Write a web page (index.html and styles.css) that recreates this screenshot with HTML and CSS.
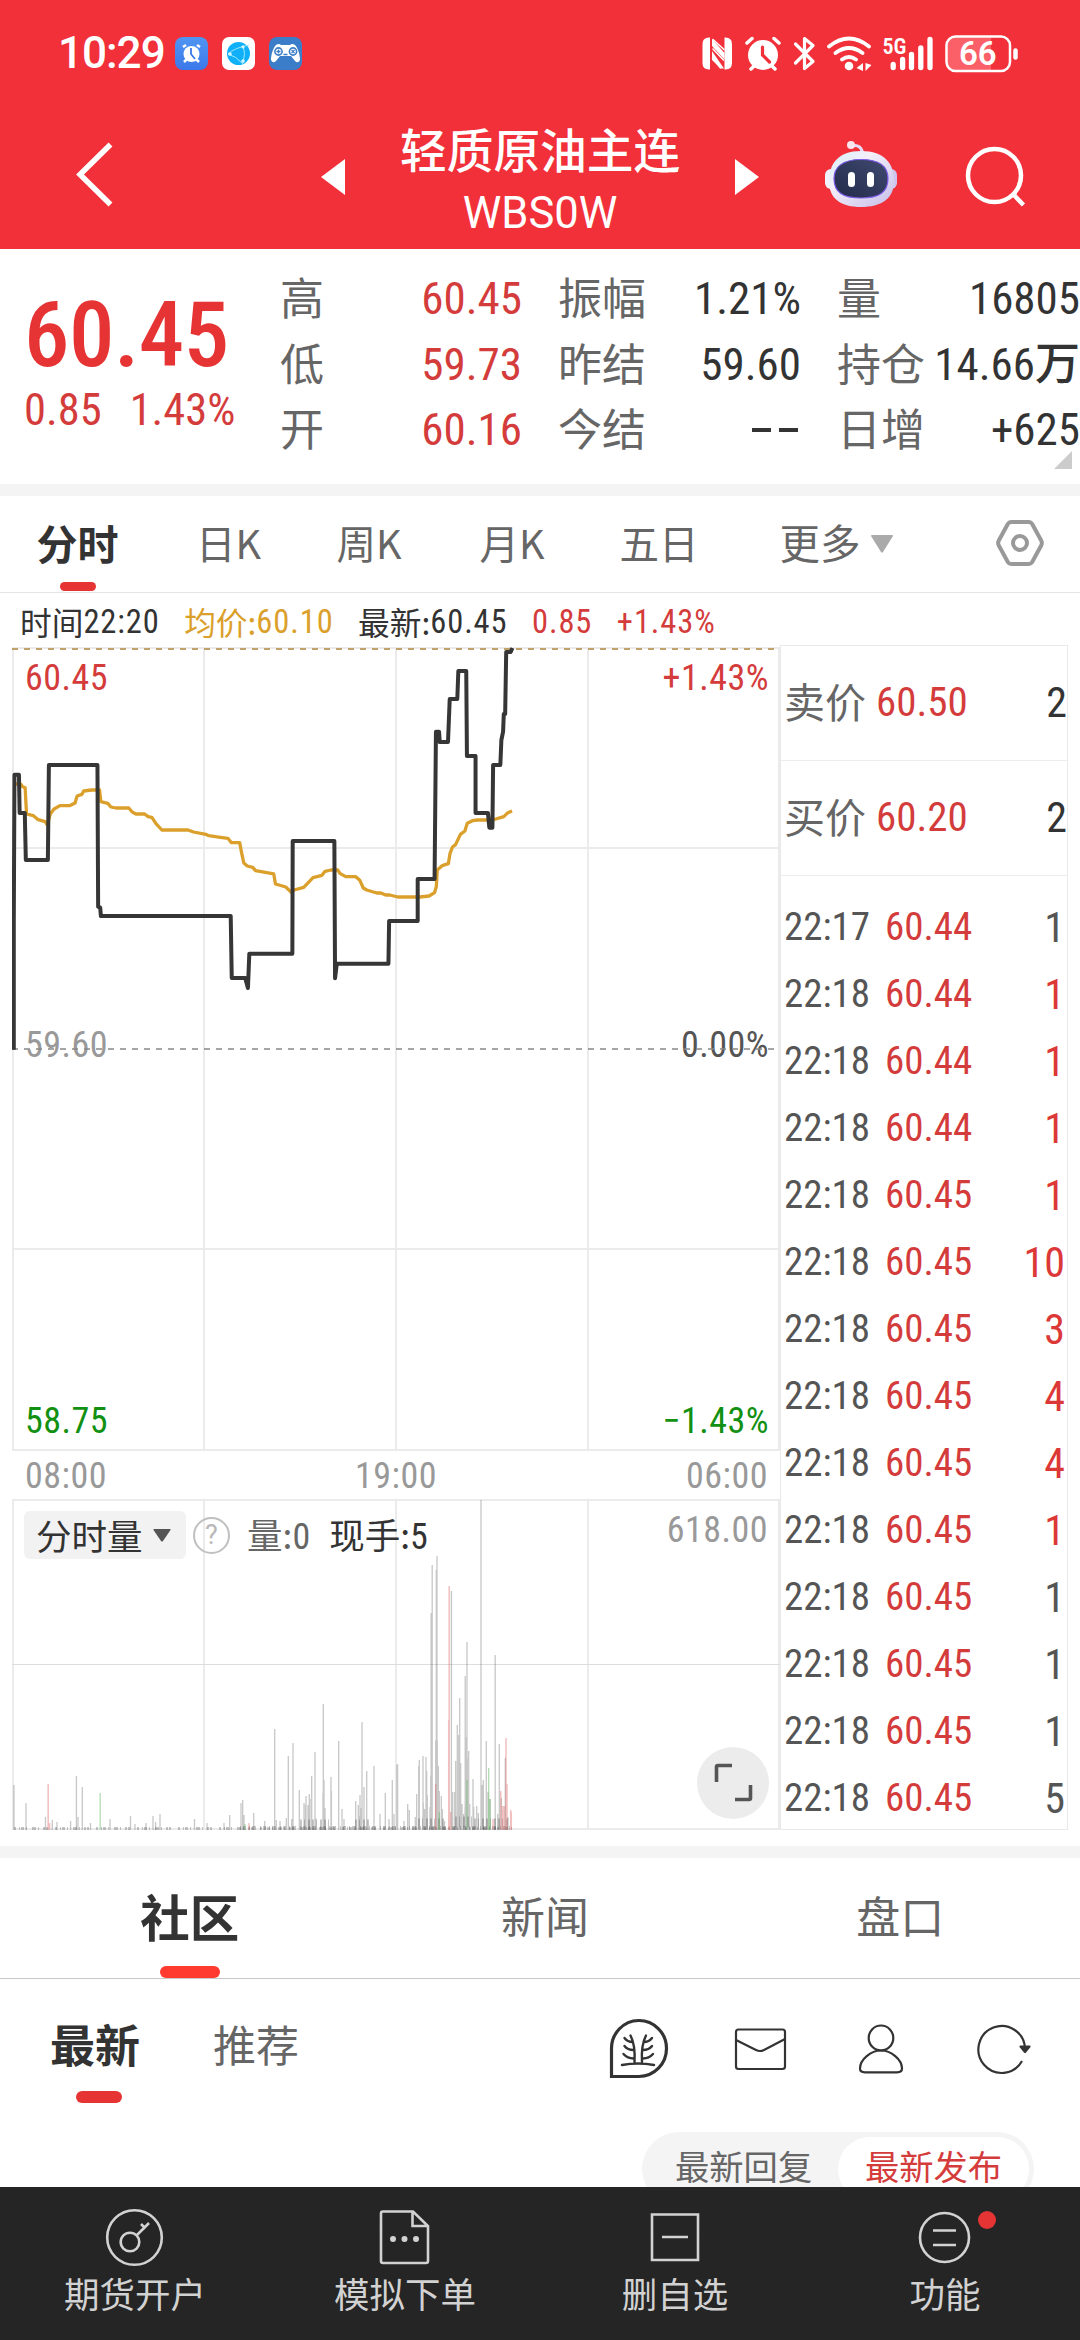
FILE: index.html
```html
<!DOCTYPE html>
<html lang="zh-CN">
<head>
<meta charset="utf-8">
<title>轻质原油主连 WBS0W</title>
<link rel="stylesheet" href="styles.css">
</head>
<body>
<div class="app">
  <header class="header">
    <div class="status">
      <span class="clock">10:29</span>
      <svg class="apps" width="128" height="34" viewBox="175 37 128 34">
        <defs><linearGradient id="ga" x1="0" y1="0" x2="0" y2="1"><stop offset="0" stop-color="#4f95f3"/><stop offset="1" stop-color="#3b78ea"/></linearGradient></defs>
        <rect x="175" y="37" width="33" height="33" rx="8" fill="url(#ga)"/>
        <circle cx="191.500" cy="54" r="8" fill="#fff"/>
        <path d="M183 47l3-2M200 47l-3-2M184 62l3-3M199 62l-3-3" stroke="#fff" stroke-width="2.500"/>
        <path d="M191 48v6l4 5" stroke="#3b78ea" stroke-width="1.800" fill="none"/>
        <rect x="222" y="37" width="33" height="33" rx="7" fill="#fff"/>
        <circle cx="238.500" cy="53.500" r="11.500" fill="#0fb0f8"/>
        <path d="M228 54Q234 48 249 45M228 54q8 2 15 10M243 45q3 8 0 18" stroke="#9be6ff" stroke-width="1" fill="none"/>
        <circle cx="230" cy="54" r="1.800" fill="#d4f6ff"/><circle cx="243" cy="47" r="1.600" fill="#d4f6ff"/><circle cx="243" cy="61" r="1.800" fill="#d4f6ff"/>
        <rect x="269" y="37" width="33" height="33" rx="8" fill="#3b7dc8"/>
        <path d="M276 45q3-2 5 0h9q2-2 5 0c3 3 5 10 5 15q-2 4-5 1l-4-5h-11l-4 5q-3 3-5-1c0-5 2-12 5-15z" fill="#fff"/>
        <circle cx="278.500" cy="51.500" r="3.600" fill="none" stroke="#3b7dc8" stroke-width="1.600"/><circle cx="293" cy="51.500" r="3.600" fill="none" stroke="#3b7dc8" stroke-width="1.600"/>
        <path d="M276.500 51.500h4M278.500 49.500v4M291.500 50l3 3M294.500 50l-3 3M283.500 54.500h4" stroke="#3b7dc8" stroke-width="1.300"/>
      </svg>
      <svg class="sys" width="320" height="40" viewBox="700 34 320 40" fill="none" stroke="#fff" stroke-linecap="round">
        <path d="M710 37.500h-1q-6.500 0-6.500 6.500v19q0 6.500 6.500 6.500h1zM724.500 37.500h1q6.500 0 6.500 6.500v19q0 6.500-6.500 6.500h-1z" fill="#fff" stroke="none"/>
        <path d="M712 39l12.500 14v6.500L712 46zM712 51l12 17.500h-3L712 60z" fill="#fff" stroke="none"/>
        <path d="M713 39.500l11 10M713 49l10.500 11M712.500 58l8 10" stroke-width="1.600"/>
        <circle cx="763" cy="55" r="15" fill="#fff" stroke="none"/>
        <path d="M747 43l5-4.500M779 43l-5-4.500M751 69l4-4M775 69l-4-4" stroke-width="3.500"/>
        <path d="M762.500 47v8l7 7" stroke="#f13039" stroke-width="3.200"/>
        <path d="M795.500 44l17.500 17.500-8.500 7V38.500l8.500 7L795.500 63" stroke-width="3.200" stroke-linejoin="round"/>
        <path d="M829 46.500q20-16 40 0M835.500 53q13.500-10 27 0M842 59.500q7-5 14 0" stroke-width="3.800"/>
        <circle cx="849" cy="66" r="4.300" fill="#fff" stroke="none"/>
        <path d="M863 63v8l-6.500-3zM865.500 63v8l6-6z" fill="#fff" stroke="none"/>
        <path d="M893.200 64.500v3M902.600 59.500v8M911.500 54.500v13M920.800 48v19.500M930 39.500v28" stroke-width="5.300"/>
        <text x="882.500" y="53.500" class="net">5G</text>
        <path d="M955 37h36v34h-36q-9 0-9-9V46q0-9 9-9z" fill="#ff747a" fill-opacity=".7" stroke="none"/>
        <rect x="946.500" y="36.500" width="63.500" height="34.500" rx="9" stroke-width="2.500"/>
        <path d="M1015.500 50.500v7" stroke-width="4.500"/>
        <text x="977.800" y="65" text-anchor="middle" class="batt">66</text>
      </svg>
    </div>
    <div class="titlebar">
      <svg width="400" height="142" viewBox="0 107 400 142">
        <path d="M110.500 144.500L80 174.500l30.500 30" fill="none" stroke="#fff" stroke-width="5.500"/>
        <path d="M345 159v36l-24-18z" fill="#fff"/>
      </svg>
      <div class="titles"><div class="name">轻质原油主连</div><div class="code">WBS0W</div></div>
      <svg width="400" height="142" viewBox="680 107 400 142">
        <defs>
          <linearGradient id="rb" x1="0" y1="0" x2="1" y2="1"><stop offset="0" stop-color="#d5f1fa"/><stop offset=".35" stop-color="#f4effa"/><stop offset="1" stop-color="#c5bde9"/></linearGradient>
          <linearGradient id="rf" x1="0" y1="1" x2="1" y2="0"><stop offset="0" stop-color="#222b4a"/><stop offset="1" stop-color="#404a70"/></linearGradient>
        </defs>
        <path d="M735 159v36l24-18z" fill="#fff"/>
        <path d="M851 146q11-3 12 10" fill="none" stroke="#e7dcf5" stroke-width="3"/>
        <circle cx="851" cy="145" r="4" fill="#fbe5ee"/>
        <rect x="825" y="169" width="14" height="20" rx="6" fill="#f0f3fb"/><rect x="883" y="169" width="14" height="20" rx="6" fill="#cfc5ee"/>
        <path d="M861 151c24 0 33 13 33 30 0 18-13 26-33 26s-32-8-32-26c0-17 9-30 32-30z" fill="url(#rb)"/>
        <path d="M861 159.500c20 0 27 8 27 19 0 14-9 19.500-27 19.500s-27-5.500-27-19.500c0-11 8-19 27-19z" fill="url(#rf)" stroke="#7d5be8" stroke-width="1.200"/>
        <path d="M851.500 175.500v8M870.500 175.500v8" stroke="#fff" stroke-width="7" stroke-linecap="round"/>
        <circle cx="994.500" cy="175.500" r="26.500" fill="none" stroke="#fff" stroke-width="4.500"/>
        <path d="M1013 194l10.500 11" stroke="#fff" stroke-width="4.500"/>
      </svg>
    </div>
  </header>

  <section class="quote">
    <div class="price"><div class="last">60.45</div><div class="chg"><span>0.85</span><span>1.43%</span></div></div>
    <dl class="stats s1"><dt>高</dt><dd>60.45</dd><dt>低</dt><dd>59.73</dd><dt>开</dt><dd>60.16</dd></dl>
    <dl class="stats s2"><dt>振幅</dt><dd>1.21%</dd><dt>昨结</dt><dd>59.60</dd><dt>今结</dt><dd class="dash"><i></i><i></i></dd></dl>
    <dl class="stats s3"><dt>量</dt><dd>16805</dd><dt>持仓</dt><dd>14.66万</dd><dt>日增</dt><dd>+625</dd></dl>
    <svg class="corner" width="18" height="18" viewBox="0 0 18 18"><path d="M18 0v18H0z" fill="#ccc"/></svg>
  </section>

  <nav class="periods">
    <span class="on">分时</span><span>日K</span><span>周K</span><span>月K</span><span>五日</span>
    <span>更多<svg width="22" height="18" viewBox="0 0 22 18"><path d="M1 0h20q1.500 0 .7 1.500L12 17q-1 1.400-2 0L.3 1.500Q-.5 0 1 0z" fill="#aaa"/></svg></span>
    <svg class="gear" width="48" height="46" viewBox="0 0 48 46" fill="none" stroke="#999" stroke-width="4"><path d="M15 2h18q2 0 3.200 2l9 16.500q1.300 2.500 0 5L36.200 42q-1.200 2-3.200 2H15q-2 0-3.200-2l-9-16.500q-1.300-2.500 0-5L11.800 4Q13 2 15 2z"/><circle cx="24" cy="23" r="7"/></svg>
  </nav>

  <div class="market">
    <div class="left">
      <div class="info"><span><b>时间</b>22:20</span><span class="avg"><b>均价:</b>60.10</span><span><b>最新:</b>60.45</span><span class="up">0.85</span><span class="up">+1.43%</span></div>
      <svg class="chart" width="768" height="853" viewBox="12 647 768 853">
        <g fill="none" stroke="#ebebeb" stroke-width="2">
          <path d="M12 648H780M12 848H780M12 1249H780M12 1450H780M13 647V1451M204 647V1451M396 647V1451M588 647V1451M779 647V1451"/>
        </g>
        <path d="M12 649H780" stroke="#c2a06c" stroke-width="2" stroke-dasharray="6 6"/>
        <g class="lbl"><text x="25" y="1057" fill="#999">59.60</text><text x="769" y="1057" text-anchor="end" fill="#555">0.00%</text></g>
        <path d="M12 1049H780" stroke="#888" stroke-width="1.500" stroke-dasharray="6 6"/>
        <g transform="translate(0 640) scale(.34435 .33333)" fill="none" stroke-linejoin="round">
          <path vector-effect="non-scaling-stroke" stroke="#dba02c" stroke-width="3.300" d="M43 432H60L66 440L73 443L77 522L97 527L111 539L131 545L137 555L146 522L157 507L174 497H202L218 489L224 468L238 463L243 453L266 450H289L293 485L313 490L322 501L337 504H374L384 516L395 522H420L430 530L441 532L453 551L470 570H546L562 576L598 583L606 587L640 592L662 595L672 608H696L702 640L708 669L718 678L734 682L742 692L795 702L800 732L830 741L846 757L854 750L882 742L909 713L935 706L944 694L961 690H981L987 700L1004 710H1033L1045 721L1055 744L1065 750L1094 759H1106L1120 765H1132L1155 771H1219L1246 768L1262 758L1267 740L1270 690L1284 677L1302 671L1307 640L1314 621L1323 614L1337 583L1350 573L1357 550L1372 542L1387 540H1430L1463 530L1475 518L1487 513"/>
          <path vector-effect="non-scaling-stroke" stroke="#363636" stroke-width="4" d="M40 1229V850L42 404H55L57 519H72L75 660H139L142 375H283L285 800L291 803L293 828H670L673 1014H712L720 1044L724 941H849L850 603H971L973 1015L978 971H1128L1130 843H1213V717H1262L1266 275H1275L1277 306H1301L1306 177H1328L1331 93H1354L1356 348H1381V519H1417L1421 563H1430L1432 375H1453L1456 300L1461 275L1463 222H1467L1470 36H1483L1488 24"/>
        </g>
        <g class="lbl">
          <text x="25" y="690" fill="#d43c3c">60.45</text><text x="769" y="690" text-anchor="end" fill="#d43c3c">+1.43%</text>
          <text x="25" y="1433" fill="#129012">58.75</text><text x="769" y="1433" text-anchor="end" fill="#129012">−1.43%</text>
          <g fill="#999"><text x="25" y="1488">08:00</text><text x="396" y="1488" text-anchor="middle">19:00</text><text x="768" y="1488" text-anchor="end">06:00</text></g>
        </g>
      </svg>
      <div class="volume">
        <svg width="768" height="331" viewBox="12 1499 768 331">
          <path d="M12 1500H780M12 1829H780M13 1499V1830M204 1499V1830M396 1499V1830M588 1499V1830M779 1499V1830" stroke="#ebebeb" stroke-width="2"/>
          <path d="M12 1664.500H780" stroke="#ddd"/>
          <g fill="none">
            <g stroke="#555" stroke-opacity=".33" stroke-width="1.300">
              <path d="M14 1830v-45M26 1830v-27M45.500 1830v-13M52.300 1830v-10M57 1830v-8M70.600 1830v-9M76.400 1830v-54M78 1830v-13M82.300 1830v-43M90.500 1830v-7M110 1830v-11M130.500 1830v-14M135 1830v-6M146 1830v-7M153 1830v-14M155.600 1830v-8M160 1830v-16M194.500 1830v-11M207 1830v-7M224 1830v-7M229.700 1830v-15M241 1830v-27M242.700 1830v-30M244 1830v-15M253.700 1830v-17M264.700 1830v-9M274.700 1830v-101M276.300 1830v-10M280 1830v-9M286.300 1830v-12M288.300 1830v-74M291.700 1830v-11M293 1830v-87M299.300 1830v-40M304 1830v-27M305.500 1830v-25M306 1830v-34M308 1830v-25M309.300 1830v-36M310 1830v-31M311.700 1830v-54M315 1830v-78M315.700 1830v-12M323 1830v-37M323.300 1830v-126M324 1830v-50M325 1830v-22M331 1830v-53M331.400 1830v-39M338.700 1830v-89M342 1830v-21M344 1830v-11M355.700 1830v-29M358.300 1830v-25M359 1830v-14M360 1830v-35M360.700 1830v-22M362 1830v-108M364 1830v-43M366.700 1830v-59M374 1830v-64M380 1830v-16M385.300 1830v-37M389 1830v-11M392.300 1830v-50M394 1830v-16M397 1830v-65M397.600 1830v-66M404 1830v-9M407.700 1830v-26M409.300 1830v-20M415.300 1830v-13M416.700 1830v-36M418.700 1830v-64M419.300 1830v-70M423 1830v-74M423.300 1830v-27M424.600 1830v-21M426 1830v-73M426.700 1830v-59M427.300 1830v-35M430 1830v-23M430.700 1830v-54M431.700 1830v-87M431.100 1830v-217M432.200 1830v-265M437 1830v-274M436.300 1830v-260M435.700 1830v-90M437.300 1830v-89M438.300 1830v-64M439.300 1830v-39M441.300 1830v-34M442.300 1830v-21M444.500 1830v-9M451.400 1830v-239M452.300 1830v-38M454.300 1830v-38M455.700 1830v-69M457.300 1830v-105M458.700 1830v-95M459.700 1830v-132M460.700 1830v-67M462 1830v-26M463.500 1830v-16M465 1830v-23M465.200 1830v-154M466 1830v-93M467 1830v-188M467.300 1830v-72M468.700 1830v-79M469.700 1830v-26M473 1830v-51M473.700 1830v-23M476.700 1830v-24M478.300 1830v-17M481 1830v-330M482 1830v-45M483.300 1830v-50M486.300 1830v-89M488 1830v-38M490 1830v-31M495.200 1830v-175M497.700 1830v-16M499.300 1830v-86M501.300 1830v-32M505.300 1830v-72M508 1830v-13"/>
              <path d="M14 1828.500H512" stroke-width="3" stroke-dasharray="2 3 1 1 3 2 1 5 4 2 1 4 2 1 2 7"/>
              <path d="M240 1828H512" stroke-width="4" stroke-dasharray="1 2 3 3 1 2 4 4"/>
              <path d="M300 1825H330M355 1825h15M418 1824h26M455 1822h18M474 1824h36" stroke-width="11" stroke-dasharray="2 2 1 3 2 2"/>
            </g>
            <path d="M48.200 1830v-46M49.600 1830v-7M249 1830v-7M435.700 1830v-46M448.700 1830v-110M449.200 1830v-244M450.700 1830v-18M493 1830v-11M500.700 1830v-39M502.700 1830v-24M504.300 1830v-24M506 1830v-92M507 1830v-46M510.700 1830v-20M511.300 1830v-18" stroke="#d66" stroke-opacity=".42" stroke-width="1.500"/>
            <path d="M100.200 1830v-37M245 1830v-6M439.300 1830v-18M467 1830v-50M488.700 1830v-62M490 1830v-31" stroke="#6b6" stroke-opacity=".5" stroke-width="1.300"/>
          </g>
          <text class="lbl" x="768" y="1542" text-anchor="end" fill="#999">618.00</text>
        </svg>
        <div class="voltop">
          <span class="pick">分时量<svg width="18" height="13" viewBox="0 0 18 13"><path d="M1 0h16q1 0 .5 1L10 12q-1 1.200-2 0L.5 1Q0 0 1 0z" fill="#555"/></svg></span>
          <span class="help">?</span>
          <span class="vl">量:<b>0</b></span><span class="hand">现手:<b>5</b></span>
        </div>
        <div class="expand"><svg width="40" height="40" viewBox="0 0 40 40" fill="none" stroke="#555" stroke-width="3.600"><path d="M3.500 19V4q0-1.500 1.500-1.500H19M37.500 22v13q0 1.500-1.500 1.500H22"/></svg></div>
      </div>
    </div>

    <aside class="ticks">
      <div class="quoteRow"><b>卖价</b><em>60.50</em><i>2</i></div>
      <div class="quoteRow"><b>买价</b><em>60.20</em><i>2</i></div>
      <ul>
        <li><span>22:17</span><em>60.44</em><i>1</i></li>
        <li><span>22:18</span><em>60.44</em><i class="up">1</i></li>
        <li><span>22:18</span><em>60.44</em><i class="up">1</i></li>
        <li><span>22:18</span><em>60.44</em><i class="up">1</i></li>
        <li><span>22:18</span><em>60.45</em><i class="up">1</i></li>
        <li><span>22:18</span><em>60.45</em><i class="up">10</i></li>
        <li><span>22:18</span><em>60.45</em><i class="up">3</i></li>
        <li><span>22:18</span><em>60.45</em><i class="up">4</i></li>
        <li><span>22:18</span><em>60.45</em><i class="up">4</i></li>
        <li><span>22:18</span><em>60.45</em><i class="up">1</i></li>
        <li><span>22:18</span><em>60.45</em><i>1</i></li>
        <li><span>22:18</span><em>60.45</em><i>1</i></li>
        <li><span>22:18</span><em>60.45</em><i>1</i></li>
        <li><span>22:18</span><em>60.45</em><i>5</i></li>
      </ul>
    </aside>
  </div>

  <nav class="sections"><span class="on">社区</span><span>新闻</span><span>盘口</span></nav>

  <section class="feed">
    <div class="feedbar">
      <span class="on">最新</span><span>推荐</span>
      <svg width="480" height="70" viewBox="600 2014 480 70" fill="none" stroke="#333" stroke-width="2.200" stroke-linejoin="round">
        <path d="M611.500 2076.500V2049a27.500 28 0 1 1 27.500 27.500z" stroke-width="3.200" stroke-linejoin="miter"/>
        <path d="M634.500 2062q1-17-4-26.500M642 2062q-1-17 4-26.500M622 2065q16-3 32 0M624.500 2038q3 4 8 4M624.500 2046q3 4 9 4M623.500 2054q4 4.500 10 4.500M652 2038q-3 4-8 4M652 2046q-3 4-9 4M653 2054q-4 4.500-10 4.500" stroke-width="2.400" stroke-linecap="round"/>
        <rect x="736" y="2029.500" width="49" height="39.500" rx="2.500"/><path d="M736 2040l20 10q4 2 8 0l21-11"/>
        <ellipse cx="881" cy="2038" rx="12.300" ry="12.500"/><path d="M881 2050.500c10 0 21 9 21 18q0 3.800-5 3.800h-32q-5 0-5-3.800c0-9 11-18 21-18z"/>
        <path d="M1022 2061a23.300 23.500 0 1 1 3-12" /><path d="M1020.500 2046.500h9l-4.500 5.500z" fill="#333"/>
      </svg>
    </div>
    <div class="sort"><span>最新回复</span><span class="on">最新发布</span></div>
  </section>

  <footer class="tabbar">
    <div><svg width="60" height="60" viewBox="105 2208 60 60"><circle cx="134.500" cy="2237.500" r="27.300"/><circle cx="130" cy="2242" r="9.300"/><path d="M137 2235l12-12M141 2224l4.500 4.500"/></svg><span>期货开户</span></div>
    <div><svg width="60" height="60" viewBox="375 2208 60 60"><path d="M383 2211.500h30l15 14.500v35q0 2-2 2h-43q-2 0-2-2v-47.500q0-2 2-2zM412.500 2211.500V2226h15"/><path d="M393 2239h.01M404.500 2239h.01M416 2239h.01" stroke-width="6" stroke-linecap="round"/></svg><span>模拟下单</span></div>
    <div><svg width="60" height="60" viewBox="644 2208 60 60"><path d="M651 2214.500h46v45.500h-46zM661 2237h26"/></svg><span>删自选</span></div>
    <div><svg width="60" height="60" viewBox="915 2208 60 60"><circle cx="944.500" cy="2237.500" r="24.500"/><path d="M933 2230.500h23M933 2245h23"/></svg><span>功能</span><i class="dot"></i></div>
  </footer>
</div>
</body>
</html>
```
FILE: styles.css
```css
* { box-sizing: border-box; }
body, dl, dd, ul { margin: 0; padding: 0; }
body {
  width: 1080px;
  background: #fff;
  font-family: "Noto Sans CJK SC", sans-serif;
  color: #333;
}
svg { display: block; flex: none; }
b, em, i { font-style: normal; font-weight: inherit; }
.app { width: 1080px; height: 2340px; overflow: hidden; display: flex; flex-direction: column; }
.app > * { flex: none; }
.up { color: #d43c3c; }

/* header */
.header { height: 249px; background: #f13039; color: #fff; }
.status { height: 107px; display: flex; align-items: center; }
.clock { width: 175px; padding-left: 58px; font: 500 44px/109px Roboto, sans-serif; letter-spacing: -1px; }
.sys { margin-left: auto; margin-right: 60px; }
.net { font: 600 22px "Roboto Condensed", Roboto, sans-serif; fill: #fff; stroke: none; }
.batt { font: 600 33px Roboto, sans-serif; fill: #fff; stroke: none; }
.titlebar { height: 142px; display: flex; }
.titles { width: 280px; padding-top: 9px; text-align: center; white-space: nowrap; }
.name { font-size: 46.7px; line-height: 64px; font-weight: 500; }
.code { font: 400 43.500px/68px Roboto, sans-serif; }

/* quote */
.quote { height: 247px; border-bottom: 12px solid #f4f4f4; position: relative; display: flex; }
.price, .stats dd { font-family: "Roboto Condensed", "Noto Sans CJK SC", sans-serif; font-weight: 450; }
.price { width: 281px; padding-left: 24px; color: #e63434; }
.last { font-size: 91px; line-height: 96px; margin-top: 38px; font-weight: 500; letter-spacing: -.5px; }
.chg { font-size: 44.500px; line-height: 54px; display: flex; gap: 28px; color: #d43c3c; }
.stats { display: grid; grid-template-columns: auto 1fr; grid-auto-rows: 65.500px; align-content: start; padding-top: 17px; font-size: 44px; line-height: 65px; white-space: nowrap; }
.stats dt { color: #666; font-size: 44px; line-height: 60px; }
.stats dd { text-align: right; font-size: 45px; }
.s1 { width: 242px; margin-left: -1px; }
.s1 dd { color: #d43c3c; }
.s2 { width: 243px; margin-left: 36px; }
.s3 { width: 243px; margin-left: 36px; }
.dash { display: flex; justify-content: flex-end; align-items: center; gap: 8px; padding-right: 3px; }
.dash i { width: 19px; height: 4px; background: #333; }
.corner { position: absolute; left: 1054px; top: 202px; }

/* period tabs */
.periods { height: 97px; border-bottom: 1px solid #e5e5e5; display: flex; align-items: center; font-size: 39.500px; color: #666; position: relative; line-height: 92px; }
.periods span { width: 142px; text-align: center; height: 96px; white-space: nowrap; display: flex; justify-content: center; align-items: flex-start; }
.periods span:nth-child(1) { width: 155px; }
.periods span:nth-child(2) { width: 147px; }
.periods span:nth-child(3) { width: 134px; }
.periods span:nth-child(4) { width: 152px; }
.periods span:nth-child(5) { width: 142px; }
.periods span:nth-child(6) { width: 212px; font-size: 40.500px; }
.periods span svg { margin: 39px 0 0 10px; }
.periods .on { font-weight: 700; color: #333; position: relative; font-size: 41px; }
.periods .on::after { content: ""; position: absolute; left: 60px; bottom: 1px; width: 36px; height: 9px; border-radius: 5px; background: #e63434; }
.gear { margin-left: 54px; margin-bottom: 2px; }

/* market */
.market { height: 1265px; border-bottom: 12px solid #f4f4f4; display: flex; }
.left { width: 780px; padding-left: 12px; }
.info { height: 54px; padding-left: 8px; display: flex; white-space: nowrap; font: 450 32.500px/59px "Roboto Condensed", sans-serif; }
.info span { display: flex; margin-right: 24.500px; letter-spacing: .9px; }
.info b { font: 400 31.700px/56px "Noto Sans CJK SC", sans-serif; letter-spacing: 0; }
.avg { color: #dba02c; }
.lbl { font: 450 36px "Roboto Condensed", sans-serif; letter-spacing: .5px; }
.volume { height: 331px; position: relative; margin-top: -1px; }
.voltop { position: absolute; left: 12px; top: 12px; display: flex; align-items: center; height: 48px; white-space: nowrap; font-size: 35.500px; line-height: 48px; }
.pick { width: 162px; height: 48px; border-radius: 6px; background: #f2f2f2; display: flex; align-items: center; padding-left: 12px; gap: 10px; line-height: 44px; }
.help { width: 37px; height: 37px; margin-left: 7px; border: 2.500px solid #c0c0c0; border-radius: 50%; font: 400 27px/33px Roboto, sans-serif; color: #b8b8b8; text-align: center; }
.voltop b { font: 450 36px/48px "Roboto Condensed", sans-serif; }
.vl { margin-left: 17px; color: #666; }
.hand { margin-left: 19px; }
.expand { position: absolute; right: 11px; top: 248px; width: 72px; height: 72px; border-radius: 50%; background: #ececec; display: grid; place-items: center; }

.ticks { width: 288px; height: 1185px; margin-top: 52px; border: 1px solid #e9e9e9; font-family: "Roboto Condensed", sans-serif; font-weight: 450; }
.quoteRow { height: 115px; border-bottom: 1px solid #ededed; display: grid; grid-template-columns: 92px 1fr auto; padding-left: 3px; line-height: 113px; font-size: 41px; }
.quoteRow b { font: 400 41px/109px "Noto Sans CJK SC", sans-serif; color: #666; }
.ticks em { color: #d43c3c; }
.quoteRow i, .ticks li i { font-size: 42px; padding-right: 0; text-align: right; }
.ticks ul { list-style: none; padding-top: 17.500px; }
.ticks li { height: 67px; display: grid; grid-template-columns: 101px 1fr auto; padding-left: 3px; font-size: 39px; line-height: 67px; color: #555; }
.ticks li i { padding-right: 2px; }
.ticks li i.up { color: #dc3838; }

/* community */
.sections { height: 121px; padding: 0 2px 0 12px; border-bottom: 1px solid #c8c8c8; display: grid; grid-template-columns: repeat(3, 1fr); text-align: center; font-size: 44px; line-height: 115px; color: #666; }
.sections .on { font-size: 49.500px; font-weight: 700; color: #333; position: relative; }
.sections .on::after { content: ""; position: absolute; left: 148px; bottom: 0; width: 60px; height: 12px; border-radius: 6px; background: #ff3b30; }
.feed { height: 208px; overflow: hidden; }
.feedbar { display: flex; height: 153px; font-size: 43px; line-height: 129px; color: #666; }
.feedbar svg { margin: 35px 0 0 auto; }
.feedbar span { margin-left: 73px; }
.feedbar .on { margin-left: 50px; font-size: 45px; font-weight: 700; color: #333; position: relative; }
.feedbar .on::after { content: ""; position: absolute; left: 26px; top: 112px; width: 46px; height: 12px; border-radius: 6px; background: #e63434; }
.sort { width: 392px; height: 74px; margin-left: 642px; padding: 5px 5px 5px 33px; border-radius: 37px; background: #f4f4f4; display: flex; justify-content: space-between; font-size: 34.300px; line-height: 57px; color: #666; }
.sort .on { width: 191px; border-radius: 32px; background: #fff; color: #d43c3c; text-align: center; }

/* bottom bar */
.tabbar { height: 153px; background: #252525; display: grid; grid-template-columns: repeat(4, 1fr); color: #d2d2d2; font-size: 35.500px; line-height: 44px; }
.tabbar div { display: flex; flex-direction: column; align-items: center; padding-top: 21px; position: relative; }
.tabbar svg { fill: none; stroke: #d2d2d2; stroke-width: 2.600px; }
.tabbar span { margin-top: 3px; }
.dot { position: absolute; left: 168px; top: 24px; width: 18px; height: 18px; border-radius: 50%; background: #e63434; }
```
